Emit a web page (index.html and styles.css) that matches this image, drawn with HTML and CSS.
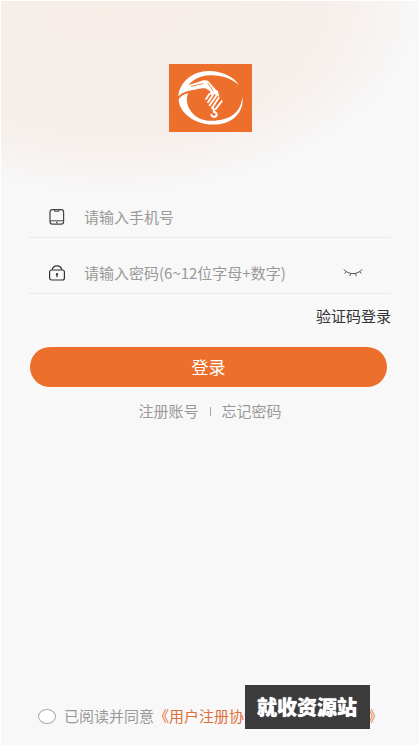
FILE: index.html
```html
<!DOCTYPE html>
<html lang="zh-CN">
<head>
<meta charset="utf-8">
<meta name="viewport" content="width=device-width, initial-scale=1">
<title>登录</title>
<link rel="stylesheet" href="styles.css">
</head>
<body>
<main class="page">
  <svg class="logo" viewBox="27 27 249 204" preserveAspectRatio="none" role="img" aria-label="logo">
    <rect x="27" y="27" width="249" height="204" fill="#ec6f2c"/>
    <path fill="#fff" d="M55 124C58 82 98 47 148 48C190 49 222 66 237 91C216 70 184 60 150 61C118 62 97 76 86 90L122 79L131 75L144 77L168 104L174 108L178 126L164 118L150 119L151 109L136 100L126 100L84 108C73 111 63 116 55 124Z"/>
    <path fill="#fff" d="M56 133C63 123 73 117 85 115C76 132 81 158 99 176C120 198 155 202 190 193C222 184 244 163 247 125C253 160 231 191 197 203C150 218 94 202 68 167C60 156 56 145 56 133Z"/>
    <path fill="none" stroke="#ec6f2c" stroke-width="2.5" d="M92 94L130 86M68 117L90 110L130 104M143 84L160 108"/>
    <path fill="none" stroke="#fff" stroke-width="5.5" stroke-linecap="round" d="M148 117L138 132M159 119L144 142M169 122L149 151M176 128L156 159M185 139L166 163"/>
    <path fill="none" stroke="#fff" stroke-width="6" stroke-linecap="round" d="M160 160L162 171C172 173 173 184 163 185C158 186 155 183 154 179"/>
  </svg>

  <form class="form">
    <div class="field">
      <label for="phone" aria-label="手机号">
        <svg class="icon" viewBox="0 0 16 16" fill="none" stroke="#444">
          <rect x="1" y="0.6" width="13.6" height="14.6" rx="2.4" stroke-width="1.2"/>
          <path d="M1 11.8H14.6M5.5 1V2.2H10V1" stroke-width="1"/>
          <path d="M7.8 12.8V14.2" stroke-width="1.4"/>
        </svg>
      </label>
      <input id="phone" type="tel" placeholder="请输入手机号">
    </div>
    <div class="field">
      <label for="password" aria-label="密码">
        <svg class="icon" viewBox="0 0 16 16" fill="none" stroke="#333">
          <rect x="0.6" y="5" width="14.8" height="10" rx="2" stroke-width="1.2"/>
          <path d="M3.2 5C3.6 2.2 5.4 0.9 8 0.9S12.4 2.2 12.8 5" stroke-width="1.2"/>
          <path d="M8 9V12" stroke-width="1.3"/>
          <circle cx="8" cy="9.2" r="1.1" fill="#333" stroke="none"/>
        </svg>
      </label>
      <input id="password" type="password" placeholder="请输入密码(6~12位字母+数字)">
      <button class="eye" type="button" aria-label="显示密码">
        <svg viewBox="0 0 20 10" fill="none" stroke="#555" stroke-linecap="round">
          <path d="M1 1.8C6 7 14 7 19 1.8M3.2 3.9L1.7 5.3M7.6 5.7L6.9 7.7M12.5 5.7L13.1 7.7M16.8 3.9L18.2 5.3"/>
        </svg>
      </button>
    </div>
    <a class="code-login" href="#">验证码登录</a>
    <button class="submit" type="submit">登录</button>
    <nav class="links">
      <a href="#">注册账号</a>
      <span class="divider"></span>
      <a href="#">忘记密码</a>
    </nav>
  </form>

  <footer class="agreement">
    <input id="agree" type="checkbox">
    <label for="agree">已阅读并同意</label>
    <a href="#">《用户注册协议》</a>
    <span class="and">和</span>
    <a href="#">《隐私政策》</a>
  </footer>
  <div class="watermark">就收资源站</div>
</main>
</body>
</html>
```

FILE: styles.css
```css
* {
  box-sizing: border-box;
}

body {
  margin: 0;
  font-family: "Noto Sans CJK SC", sans-serif;
  font-size: 15px;
  line-height: 20px;
  color: #999;
}

a {
  color: inherit;
  text-decoration: none;
}

button {
  padding: 0;
  border: 0;
  background: none;
  font: inherit;
}

.page {
  position: relative;
  display: flex;
  flex-direction: column;
  min-height: 100vh;
  padding: 63px 28px 19px 28px;
  border: 1px solid #fff;
  background:
    radial-gradient(ellipse 310px 192px at 110px 0, #f6ede7 0%, #f6eeea 68%, #f7f3f1 86%, #f8f8f8 100%) no-repeat,
    #f8f8f8;
}

.logo {
  align-self: center;
  width: 83px;
  height: 68px;
}

.form {
  display: flex;
  flex-direction: column;
  margin-top: 50px;
}

.field {
  display: flex;
  align-items: center;
  height: 56px;
  padding: 14px 28px 0 20px;
  border-bottom: 1px solid #ebebeb;
}

.icon {
  display: block;
  width: 16px;
  height: 16px;
}

.field input {
  flex: 1;
  min-width: 0;
  height: 24px;
  margin-left: 19px;
  padding: 0;
  border: 0;
  outline: 0;
  background: none;
  color: #333;
  font: inherit;
}

.field input::placeholder {
  color: #999;
  opacity: 1;
}

.eye svg {
  display: block;
  width: 20px;
  height: 10px;
}

.code-login {
  align-self: flex-end;
  margin-top: 12px;
  color: #333;
}

.submit {
  height: 40px;
  margin: 21px 4px 0 1px;
  border-radius: 20px;
  background: #ec6f2c;
  color: #fff;
  font-size: 17px;
}

.links {
  display: flex;
  justify-content: center;
  align-items: center;
  margin-top: 14px;
}

.divider {
  width: 1px;
  height: 9px;
  margin: 0 11px;
  background: #aaa;
}

.agreement {
  display: flex;
  align-items: center;
  margin-top: auto;
  padding-left: 9px;
  white-space: nowrap;
}

.agreement input {
  appearance: none;
  width: 18px;
  height: 15px;
  margin: 0 8px 0 0;
  border: 1px solid #aaa;
  border-radius: 50%;
  background: #fff;
}

.agreement a {
  color: #e0703a;
}

.and {
  margin: 0 2px;
}

.watermark {
  position: absolute;
  right: 49px;
  bottom: 16px;
  padding: 8px 13px 8px 12px;
  background: #3b3b3b;
  color: #fff;
  font-size: 20px;
  font-weight: 900;
  line-height: 28px;
  text-shadow: 0 0 1px #fff;
}
```
